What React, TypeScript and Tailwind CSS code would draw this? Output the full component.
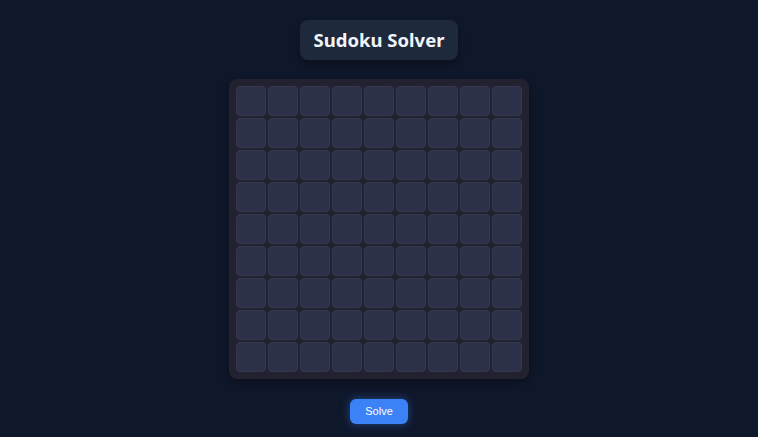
import React from "react";

export default function App() {
  const cells = Array.from({ length: 81 });
  return (
    <div className="min-h-[437px] w-full bg-[#0f172a] flex flex-col items-center pt-5" style={{ fontFamily: '"Noto Sans", sans-serif' }}>
      <div className="h-10 w-[158px] flex items-center justify-center rounded-lg bg-[#1e293b] shadow-[0_4px_8px_rgba(0,0,0,0.3)]">
        <h1 className="text-[18.5px] font-bold text-[#f1f5f9] leading-none">Sudoku Solver</h1>
      </div>
      <div className="mt-[19px] w-[300px] h-[300px] p-[7px] rounded-lg bg-[#22212f] shadow-[0_4px_10px_rgba(0,0,0,0.3)] grid grid-cols-9 grid-rows-9 gap-[2px]">
        {cells.map((_, i) => (
          <div key={i} className="w-[30px] h-[30px] rounded-[4px] bg-[#2d3049] border border-[#34374f]" />
        ))}
      </div>
      <button
        className="mt-5 w-[58px] h-[25px] rounded-md bg-[#3b82f6] text-white text-[11px] shadow-[0_0_10px_rgba(59,130,246,0.45)]"
        style={{ fontFamily: '"Liberation Sans", Arial, sans-serif' }}
      >
        Solve
      </button>
    </div>
  );
}
